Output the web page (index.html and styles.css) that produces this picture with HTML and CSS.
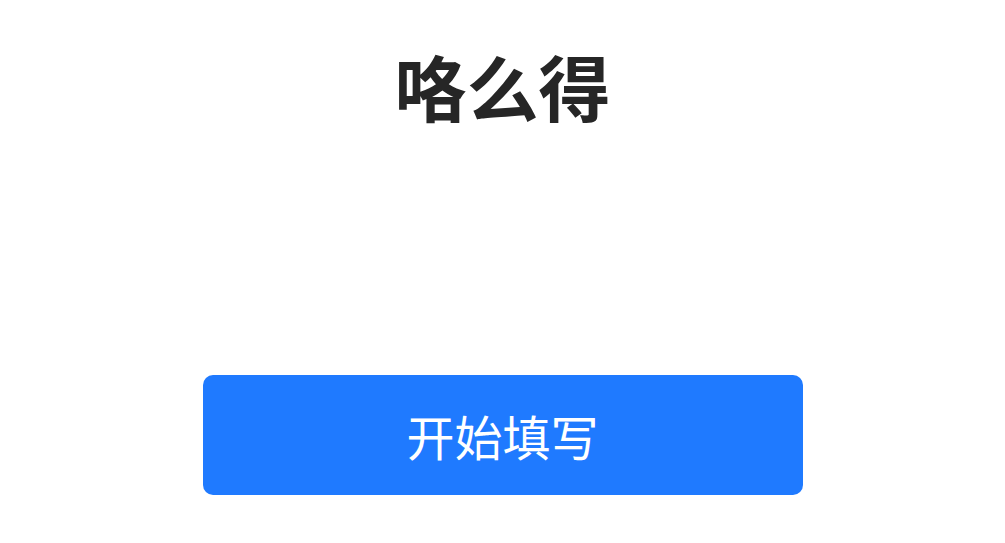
FILE: index.html
```html
<!DOCTYPE html>
<html lang="zh">
<head>
<meta charset="utf-8">
<link rel="stylesheet" href="styles.css">
</head>
<body>
<main class="page">
  <h1 class="title">咯么得</h1>
  <button class="start-btn">开始填写</button>
</main>
</body>
</html>
```

FILE: styles.css
```css
html, body {
  margin: 0;
  padding: 0;
  background: #ffffff;
}
.page {
  display: flex;
  flex-direction: column;
  align-items: center;
  font-family: "Noto Sans CJK SC", "Noto Sans", sans-serif;
}
.title {
  margin: 35px 0 0 0;
  height: 100px;
  line-height: 100px;
  font-size: 72px;
  font-weight: 700;
  color: #262626;
}
.start-btn {
  margin-top: 240px;
  width: 600px;
  height: 120px;
  border: none;
  border-radius: 10px;
  background: #1f7aff;
  color: #ffffff;
  font-family: "Noto Sans CJK SC", "Noto Sans", sans-serif;
  font-size: 48px;
  font-weight: 400;
  line-height: 120px;
  padding: 0;
}
```
